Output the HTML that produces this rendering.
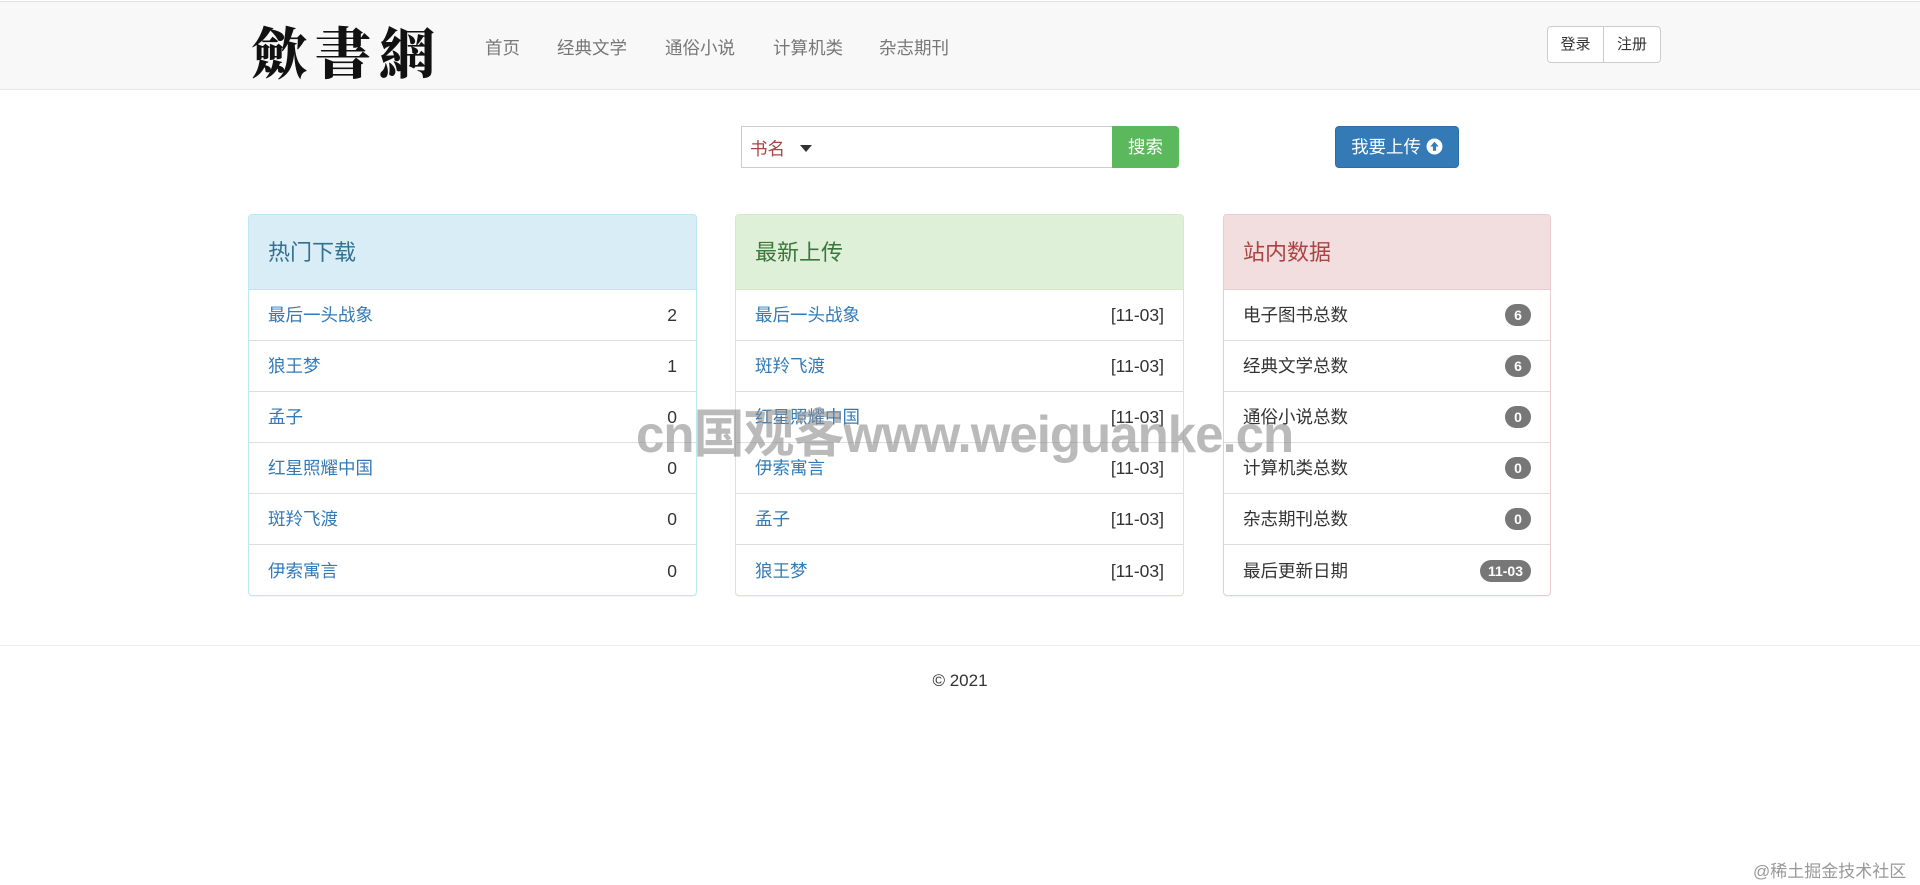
<!DOCTYPE html>
<html><head><meta charset="utf-8"><style>
*{box-sizing:border-box;margin:0;padding:0}
body{width:1920px;height:885px;background:#fff;font-family:"Liberation Sans","Noto Sans CJK SC",sans-serif;color:#333;position:relative;overflow:hidden}
.nav{position:absolute;left:0;top:1px;width:1920px;height:89px;background:#f8f8f8;border-top:1px solid #e3e3e3;border-bottom:1px solid #e7e7e7}
.logo{position:absolute;left:251px;top:14px;font-family:"Noto Serif CJK SC",serif;font-weight:900;font-size:56px;letter-spacing:8px;color:#111;line-height:70px}
.nl{position:absolute;top:34px;font-size:17.5px;color:#777;line-height:24px}
.btns{position:absolute;left:1547px;top:24px;height:37px;display:flex;border:1px solid #ccc;border-radius:4px;background:#fff}
.btns div{width:56px;height:35px;line-height:35px;text-align:center;font-size:15px;color:#333}
.btns div:first-child{border-right:1px solid #ccc}
.search{position:absolute;left:741px;top:126px;width:372px;height:42px;border:1px solid #ccc;border-right:none}
.search span{position:absolute;left:8px;top:9px;font-size:17.5px;color:#a94442}
.tri{position:absolute;left:58px;top:18px;border-left:6px solid transparent;border-right:6px solid transparent;border-top:7px solid #333}
.sbtn{position:absolute;left:1112px;top:126px;width:67px;height:42px;background:#5cb85c;border-radius:0 4px 4px 0;color:#fff;font-size:17.5px;line-height:42px;text-align:center}
.up{position:absolute;left:1335px;top:126px;width:124px;height:42px;background:#337ab7;border:1px solid #2e6da4;border-radius:4px;color:#fff;font-size:17.5px;line-height:40px;text-align:center}
.panel{position:absolute;top:214px;height:382px;border:1px solid;border-radius:4px;overflow:hidden;box-shadow:0 1px 1px rgba(0,0,0,.05)}
.ph{height:75px;padding-left:19px;line-height:75px;font-size:22px;border-bottom:1px solid}
.row{height:51px;line-height:50px;border-bottom:1px solid #ddd;padding:0 19px;font-size:17.5px;display:flex;justify-content:space-between;align-items:center}
.row:last-child{border-bottom:none}
.row a{color:#337ab7}
.badge{background:#777;color:#fff;font-weight:bold;font-size:14px;border-radius:12px;height:22px;line-height:22px;min-width:26px;padding:0 8px;text-align:center}
.foot{position:absolute;top:645px;left:0;width:1920px;border-top:1px solid #eee}
.copy{position:absolute;top:671px;left:0;width:1920px;text-align:center;font-size:17px;color:#333}
.wm{position:absolute;left:636px;top:392px;font-size:52px;font-weight:bold;color:rgba(140,140,140,.6);letter-spacing:-1px;white-space:nowrap;transform-origin:0 0;transform:scaleX(0.98)}
.jj{position:absolute;left:1753px;top:857px;font-size:17px;color:#999}
</style></head><body>
<div class="nav">
<div class="logo">歛書網</div>
<div class="nl" style="left:485px">首页</div>
<div class="nl" style="left:557px">经典文学</div>
<div class="nl" style="left:665px">通俗小说</div>
<div class="nl" style="left:773px">计算机类</div>
<div class="nl" style="left:879px">杂志期刊</div>
<div class="btns"><div>登录</div><div>注册</div></div>
</div>
<div class="search"><span>书名</span><i class="tri"></i></div>
<div class="sbtn">搜索</div>
<div class="up">我要上传 <svg width="17" height="17" viewBox="0 0 16 16" style="vertical-align:-2px"><circle cx="8" cy="8" r="7.5" fill="#fff"/><path d="M8 3.5L4 8h2.5v4h3V8H12z" fill="#337ab7"/></svg></div>

<div class="panel" style="left:248px;width:449px;border-color:#bce8f1">
<div class="ph" style="background:#d9edf7;color:#31708f;border-color:#bce8f1">热门下载</div>
<div class="row"><a>最后一头战象</a><span>2</span></div>
<div class="row"><a>狼王梦</a><span>1</span></div>
<div class="row"><a>孟子</a><span>0</span></div>
<div class="row"><a>红星照耀中国</a><span>0</span></div>
<div class="row"><a>斑羚飞渡</a><span>0</span></div>
<div class="row"><a>伊索寓言</a><span>0</span></div>
</div>
<div class="panel" style="left:735px;width:449px;border-color:#d6e9c6">
<div class="ph" style="background:#dff0d8;color:#3c763d;border-color:#d6e9c6">最新上传</div>
<div class="row"><a>最后一头战象</a><span>[11-03]</span></div>
<div class="row"><a>斑羚飞渡</a><span>[11-03]</span></div>
<div class="row"><a>红星照耀中国</a><span>[11-03]</span></div>
<div class="row"><a>伊索寓言</a><span>[11-03]</span></div>
<div class="row"><a>孟子</a><span>[11-03]</span></div>
<div class="row"><a>狼王梦</a><span>[11-03]</span></div>
</div>
<div class="panel" style="left:1223px;width:328px;border-color:#ebccd1">
<div class="ph" style="background:#f2dede;color:#a94442;border-color:#ebccd1">站内数据</div>
<div class="row"><span>电子图书总数</span><span class="badge">6</span></div>
<div class="row"><span>经典文学总数</span><span class="badge">6</span></div>
<div class="row"><span>通俗小说总数</span><span class="badge">0</span></div>
<div class="row"><span>计算机类总数</span><span class="badge">0</span></div>
<div class="row"><span>杂志期刊总数</span><span class="badge">0</span></div>
<div class="row"><span>最后更新日期</span><span class="badge">11-03</span></div>
</div>
<div class="wm">cn国观客www.weiguanke.cn</div>
<div class="foot"></div>
<div class="copy">© 2021</div>
<div class="jj">@稀土掘金技术社区</div>
</body></html>
